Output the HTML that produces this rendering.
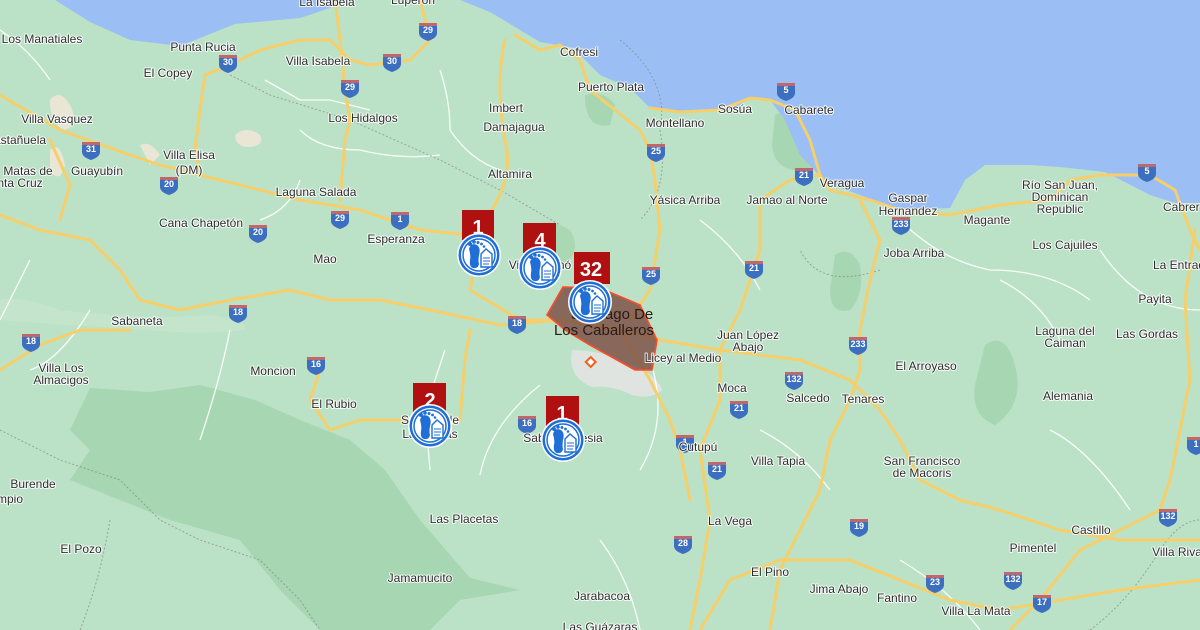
<!DOCTYPE html>
<html><head><meta charset="utf-8"><style>
html,body{margin:0;padding:0;width:1200px;height:630px;overflow:hidden;background:#bbe2c6}
svg{display:block}
text{font-family:"Liberation Sans",sans-serif;font-size:12px;fill:#2e2e2e;stroke:#fff;stroke-width:2px;stroke-opacity:.85;paint-order:stroke;stroke-linejoin:round}
.sh text{font-size:9px;fill:#fff;stroke:none;font-weight:bold}
.num{fill:#fff;stroke:none;font-size:20px;font-weight:bold}
</style></head><body>
<svg width="1200" height="630" viewBox="0 0 1200 630" xmlns="http://www.w3.org/2000/svg">
<defs>
<g id="sh"><path d="M-9,-7 h18 v9 q0,5 -9,8 q-9,-3 -9,-8z" fill="#3d6fc0"/><rect x="-9" y="-8" width="18" height="3" fill="#c0676c"/></g>
<g id="mk">
<circle r="22" fill="#fff"/><circle r="20.5" fill="#1f6fd6"/><circle r="18" fill="#fff"/><circle r="16" fill="#fff" stroke="#1f6fd6" stroke-width="1.5"/>
<path d="M-10,-6 q2,-7 8,-4 q4,3 2,10 q-1,6 0,9 q-1,5 -6,4 q-4,-1 -3,-8 q1,-4 -1,-11z" fill="#1f6fd6"/>
<circle cx="-9" cy="-11" r="2" fill="#1f6fd6"/><circle cx="-5" cy="-13" r="1.8" fill="#1f6fd6"/><circle cx="-1" cy="-12.5" r="1.5" fill="#1f6fd6"/><circle cx="2.5" cy="-11" r="1.4" fill="#1f6fd6"/><circle cx="5" cy="-8.5" r="1.3" fill="#1f6fd6"/>
<path d="M2,-1 l5,-5 l6,5 v13 h-11z" fill="#fff" stroke="#1f6fd6" stroke-width="1.4"/>
<path d="M4,3 h7 M4,6 h7 M4,9 h6" stroke="#1f6fd6" stroke-width="1"/>
</g>
</defs>
<rect width="1200" height="630" fill="#bbe2c6"/>
<path d="M90,388 L70,430 L90,450 L70,480 L170,520 L240,540 L280,590 L320,630 L430,630 L460,600 L520,590 L470,578 L420,520 L385,470 L350,440 L300,420 L255,400 L200,385 L150,392Z" fill="#a7d6b2"/>
<path d="M835,255 q15,-10 25,10 q5,30 -10,45 q-20,5 -20,-20z" fill="#a7d6b2"/>
<path d="M985,345 q20,-15 30,20 q10,40 -20,60 q-25,-10 -20,-40z" fill="#a7d6b2"/>
<path d="M775,115 q30,-15 50,5 q10,40 -15,50 q-35,5 -38,-25z" fill="#a7d6b2"/>
<path d="M585,95 q20,-5 30,10 l-5,20 q-25,5 -25,-30z" fill="#a7d6b2"/>
<path d="M525,230 q20,-15 45,0 q15,25 -15,40 q-30,0 -30,-40z" fill="#a9d8b3"/>
<path d="M235,135 q12,-10 25,0 q5,10 -10,12 q-15,0 -15,-12z" fill="#eae6d6"/>
<path d="M50,100 q10,-12 20,5 q10,20 -5,25 q-15,-5 -15,-30z" fill="#eae6d6"/>
<path d="M50,150 q10,-10 15,15 q-5,20 -15,5z" fill="#eae6d6"/>
<path d="M140,145 q10,-5 20,10 l-10,10z" fill="#eae6d6"/>
<path d="M0,300 q20,-5 60,10 q80,10 150,5 q40,5 35,15 q-40,5 -100,0 q-80,-5 -145,-10z" fill="#c9e6cf" opacity=".6"/>
<path d="M572,350 q30,0 60,15 q25,10 30,25 q-10,10 -30,5 q-20,-10 -40,-8 q-25,-10 -20,-37z" fill="#dfe4e1"/>
<path d="M55,0 L340,0 L330,8 L300,18 L235,24 L180,46 L130,40 L90,22Z" fill="#9bbff4"/>
<path d="M460,0 L1200,0 L1200,203 L1175,203 L1150,195 L1105,172 L1060,167 L1030,165 L985,165 L965,180 L950,208 L900,210 L860,195 L827,183 L800,155 L785,120 L770,100 L750,98 L735,108 L720,110 L680,112 L650,108 L630,88 L600,75 L585,60 L575,48 L540,42 L520,30 L490,12Z" fill="#9bbff4"/>
<g fill="none" stroke="#fff" stroke-width="1.3" opacity=".9">
<path d="M265,80 L300,100 L330,100 L370,110"/><path d="M300,130 q20,20 60,20 q40,10 80,5"/>
<path d="M440,70 q10,30 10,60 q20,30 50,40"/><path d="M300,180 q-10,30 -40,40"/>
<path d="M700,220 q40,30 60,70"/><path d="M900,220 q40,40 90,50 q60,0 100,30"/>
<path d="M1000,280 q40,20 60,60"/><path d="M1100,250 q40,60 100,60"/>
<path d="M0,30 q30,20 50,50"/><path d="M30,260 q-20,40 -30,60"/>
<path d="M430,470 l-5,-60 l20,-60"/><path d="M480,475 q10,-50 60,-90"/>
<path d="M650,360 q20,60 -10,110"/><path d="M760,430 q40,20 70,60"/>
<path d="M1050,430 q40,20 80,80"/><path d="M30,370 q30,-10 60,-60"/>
<path d="M200,440 q20,-60 30,-110"/><path d="M600,540 q30,40 40,90"/>
<path d="M900,560 q50,30 80,70"/>
</g>
<g fill="none" stroke="#888" stroke-width="1" stroke-dasharray="2,2" opacity=".7">
<path d="M230,75 L270,95 L350,120 L440,160 L470,175 L500,190 L560,225"/>
<path d="M0,430 L60,460 L120,480 L160,520 L200,540 L260,560 L300,600 L320,630"/>
<path d="M110,520 q-10,60 -30,110"/><path d="M880,270 q-60,20 -80,-20"/>
<path d="M1090,630 q40,-30 70,-80 q20,-30 40,-30"/>
<path d="M620,40 q50,40 40,90 q10,60 -20,90"/>
</g>
<g fill="none" stroke="#f6cf6a" stroke-width="3" stroke-linecap="round" stroke-linejoin="round">
<path d="M0,95 L60,130 L130,155 L160,165 L200,175 L300,200 L360,210 L420,230 L470,235"/>
<path d="M230,65 L205,75 L200,110 L195,150 L200,170"/>
<path d="M230,65 L260,50 L300,40 L330,40 L350,60 L370,65 L410,60 L430,40 L420,0"/>
<path d="M335,0 L340,40 L345,90 L350,120 L345,140 L340,200"/>
<path d="M515,35 L540,50 L560,45 L580,60 L590,90 L615,110 L640,130 L650,150 L655,180 L660,230 L650,290 L630,320"/>
<path d="M505,40 q-10,40 0,100 q10,40 -20,80 L480,240 L470,290 L520,320 L560,320"/>
<path d="M650,108 L680,112 L720,110 L750,98 L770,100 L795,110 L810,140 L820,175 L830,190 L870,200 L900,210 L950,215 L1000,205 L1050,200 L1070,180 L1100,175 L1150,175 L1175,190 L1190,230 L1200,250"/>
<path d="M1195,230 L1185,300 L1190,380 L1180,430 L1170,480 L1160,510 L1120,530 L1080,550 L1040,600 L1010,630"/>
<path d="M820,175 L790,180 L760,200 L760,250 L740,310 L720,350 L720,400 L700,450 L710,520 L700,580 L690,630"/>
<path d="M560,320 L620,330 L660,340 L720,350 L800,360 L850,380 L880,410 L900,440 L920,480 L960,500 L1000,510 L1060,530 L1120,540 L1200,540"/>
<path d="M860,200 L880,240 L870,280 L860,330 L860,370 L850,400 L830,440 L820,490 L800,530 L780,570 L770,630"/>
<path d="M620,330 L650,380 L670,420 L680,450 L690,500"/>
<path d="M0,215 L40,230 L90,240 L120,270 L140,300 L180,310 L230,300 L290,290 L330,300 L380,300 L430,310 L500,325 L560,320"/>
<path d="M0,370 L40,345 L80,330 L130,330"/>
<path d="M320,370 L310,400 L330,430 L360,420 L410,420 L440,430 L460,420 L465,360 L470,330"/>
<path d="M50,140 L70,185 L60,220"/>
<path d="M700,630 L730,580 L780,560 L850,560 L900,580 L950,600 L1000,610 L1060,600 L1120,590 L1200,580"/>
</g>
<path d="M563,287 L600,288 L640,305 L657,340 L652,370 L635,370 L590,345 L565,330 L547,315Z" fill="#7a4a40" fill-opacity=".8" stroke="#ff4a2a" stroke-width="1.6"/>
<rect x="587" y="358" width="7" height="7" fill="#fff" stroke="#f06020" stroke-width="2" transform="rotate(45 590 362)"/>
<g class="sh">
<g transform="translate(228,63)"><use href="#sh"/><text x="0" y="2" text-anchor="middle">30</text></g>
<g transform="translate(428,31)"><use href="#sh"/><text x="0" y="2" text-anchor="middle">29</text></g>
<g transform="translate(392,62)"><use href="#sh"/><text x="0" y="2" text-anchor="middle">30</text></g>
<g transform="translate(350,88)"><use href="#sh"/><text x="0" y="2" text-anchor="middle">29</text></g>
<g transform="translate(91,150)"><use href="#sh"/><text x="0" y="2" text-anchor="middle">31</text></g>
<g transform="translate(169,185)"><use href="#sh"/><text x="0" y="2" text-anchor="middle">20</text></g>
<g transform="translate(340,219)"><use href="#sh"/><text x="0" y="2" text-anchor="middle">29</text></g>
<g transform="translate(400,220)"><use href="#sh"/><text x="0" y="2" text-anchor="middle">1</text></g>
<g transform="translate(258,233)"><use href="#sh"/><text x="0" y="2" text-anchor="middle">20</text></g>
<g transform="translate(238,313)"><use href="#sh"/><text x="0" y="2" text-anchor="middle">18</text></g>
<g transform="translate(31,342)"><use href="#sh"/><text x="0" y="2" text-anchor="middle">18</text></g>
<g transform="translate(316,365)"><use href="#sh"/><text x="0" y="2" text-anchor="middle">16</text></g>
<g transform="translate(517,324)"><use href="#sh"/><text x="0" y="2" text-anchor="middle">18</text></g>
<g transform="translate(651,275)"><use href="#sh"/><text x="0" y="2" text-anchor="middle">25</text></g>
<g transform="translate(656,152)"><use href="#sh"/><text x="0" y="2" text-anchor="middle">25</text></g>
<g transform="translate(786,91)"><use href="#sh"/><text x="0" y="2" text-anchor="middle">5</text></g>
<g transform="translate(804,176)"><use href="#sh"/><text x="0" y="2" text-anchor="middle">21</text></g>
<g transform="translate(754,269)"><use href="#sh"/><text x="0" y="2" text-anchor="middle">21</text></g>
<g transform="translate(901,225)"><use href="#sh"/><text x="0" y="2" text-anchor="middle">233</text></g>
<g transform="translate(1147,172)"><use href="#sh"/><text x="0" y="2" text-anchor="middle">5</text></g>
<g transform="translate(858,345)"><use href="#sh"/><text x="0" y="2" text-anchor="middle">233</text></g>
<g transform="translate(794,380)"><use href="#sh"/><text x="0" y="2" text-anchor="middle">132</text></g>
<g transform="translate(739,409)"><use href="#sh"/><text x="0" y="2" text-anchor="middle">21</text></g>
<g transform="translate(685,443)"><use href="#sh"/><text x="0" y="2" text-anchor="middle">1</text></g>
<g transform="translate(717,470)"><use href="#sh"/><text x="0" y="2" text-anchor="middle">21</text></g>
<g transform="translate(527,424)"><use href="#sh"/><text x="0" y="2" text-anchor="middle">16</text></g>
<g transform="translate(859,527)"><use href="#sh"/><text x="0" y="2" text-anchor="middle">19</text></g>
<g transform="translate(683,544)"><use href="#sh"/><text x="0" y="2" text-anchor="middle">28</text></g>
<g transform="translate(1013,580)"><use href="#sh"/><text x="0" y="2" text-anchor="middle">132</text></g>
<g transform="translate(935,583)"><use href="#sh"/><text x="0" y="2" text-anchor="middle">23</text></g>
<g transform="translate(1042,603)"><use href="#sh"/><text x="0" y="2" text-anchor="middle">17</text></g>
<g transform="translate(1168,517)"><use href="#sh"/><text x="0" y="2" text-anchor="middle">132</text></g>
<g transform="translate(1196,445)"><use href="#sh"/><text x="0" y="2" text-anchor="middle">1</text></g>
</g>
<text x="327" y="6" text-anchor="middle">La Isabela</text>
<text x="413" y="4" text-anchor="middle">Luperón</text>
<text x="42" y="43" text-anchor="middle">Los Manatiales</text>
<text x="203" y="51" text-anchor="middle">Punta Rucia</text>
<text x="168" y="77" text-anchor="middle">El Copey</text>
<text x="318" y="65" text-anchor="middle">Villa Isabela</text>
<text x="579" y="56" text-anchor="middle">Cofresi</text>
<text x="611" y="91" text-anchor="middle">Puerto Plata</text>
<text x="735" y="113" text-anchor="middle">Sosúa</text>
<text x="809" y="114" text-anchor="middle">Cabarete</text>
<text x="675" y="127" text-anchor="middle">Montellano</text>
<text x="506" y="112" text-anchor="middle">Imbert</text>
<text x="514" y="131" text-anchor="middle">Damajagua</text>
<text x="363" y="122" text-anchor="middle">Los Hidalgos</text>
<text x="57" y="123" text-anchor="middle">Villa Vasquez</text>
<text x="20" y="144" text-anchor="middle">astañuela</text>
<text x="189" y="159" text-anchor="middle">Villa Elisa</text>
<text x="189" y="174" text-anchor="middle">(DM)</text>
<text x="28" y="175" text-anchor="middle">Matas de</text>
<text x="20" y="187" text-anchor="middle">nta Cruz</text>
<text x="97" y="175" text-anchor="middle">Guayubín</text>
<text x="510" y="178" text-anchor="middle">Altamira</text>
<text x="316" y="196" text-anchor="middle">Laguna Salada</text>
<text x="685" y="204" text-anchor="middle">Yásica Arriba</text>
<text x="787" y="204" text-anchor="middle">Jamao al Norte</text>
<text x="842" y="187" text-anchor="middle">Veragua</text>
<text x="908" y="202" text-anchor="middle">Gaspar</text>
<text x="908" y="215" text-anchor="middle">Hernandez</text>
<text x="987" y="224" text-anchor="middle">Magante</text>
<text x="1060" y="189" text-anchor="middle">Río San Juan,</text>
<text x="1060" y="201" text-anchor="middle">Dominican</text>
<text x="1060" y="213" text-anchor="middle">Republic</text>
<text x="1163" y="211">Cabrer</text>
<text x="201" y="227" text-anchor="middle">Cana Chapetón</text>
<text x="396" y="243" text-anchor="middle">Esperanza</text>
<text x="1065" y="249" text-anchor="middle">Los Cajuiles</text>
<text x="914" y="257" text-anchor="middle">Joba Arriba</text>
<text x="325" y="263" text-anchor="middle">Mao</text>
<text x="1153" y="269">La Entrad</text>
<text x="1155" y="303" text-anchor="middle">Payita</text>
<text x="137" y="325" text-anchor="middle">Sabaneta</text>
<text x="1065" y="335" text-anchor="middle">Laguna del</text>
<text x="1065" y="347" text-anchor="middle">Caiman</text>
<text x="1147" y="338" text-anchor="middle">Las Gordas</text>
<text x="748" y="339" text-anchor="middle">Juan López</text>
<text x="748" y="351" text-anchor="middle">Abajo</text>
<text x="61" y="372" text-anchor="middle">Villa Los</text>
<text x="61" y="384" text-anchor="middle">Almacigos</text>
<text x="926" y="370" text-anchor="middle">El Arroyaso</text>
<text x="273" y="375" text-anchor="middle">Moncion</text>
<text x="683" y="362" text-anchor="middle">Licey al Medio</text>
<text x="1068" y="400" text-anchor="middle">Alemania</text>
<text x="732" y="392" text-anchor="middle">Moca</text>
<text x="808" y="402" text-anchor="middle">Salcedo</text>
<text x="863" y="403" text-anchor="middle">Tenares</text>
<text x="334" y="408" text-anchor="middle">El Rubio</text>
<text x="698" y="451" text-anchor="middle">Cutupú</text>
<text x="922" y="465" text-anchor="middle">San Francisco</text>
<text x="922" y="477" text-anchor="middle">de Macoris</text>
<text x="778" y="465" text-anchor="middle">Villa Tapia</text>
<text x="33" y="488" text-anchor="middle">Burende</text>
<text x="10" y="503" text-anchor="middle">mpio</text>
<text x="464" y="523" text-anchor="middle">Las Placetas</text>
<text x="1091" y="534" text-anchor="middle">Castillo</text>
<text x="730" y="525" text-anchor="middle">La Vega</text>
<text x="1033" y="552" text-anchor="middle">Pimentel</text>
<text x="1177" y="556" text-anchor="middle">Villa Riva</text>
<text x="81" y="553" text-anchor="middle">El Pozo</text>
<text x="770" y="576" text-anchor="middle">El Pino</text>
<text x="839" y="593" text-anchor="middle">Jima Abajo</text>
<text x="420" y="582" text-anchor="middle">Jamamucito</text>
<text x="602" y="600" text-anchor="middle">Jarabacoa</text>
<text x="897" y="602" text-anchor="middle">Fantino</text>
<text x="976" y="615" text-anchor="middle">Villa La Mata</text>
<text x="600" y="631" text-anchor="middle">Las Guázaras</text>
<text x="430" y="424" text-anchor="middle">Sabana de</text>
<text x="430" y="438" text-anchor="middle">Las Matas</text>
<text x="563" y="442" text-anchor="middle">Sabana Iglesia</text>
<text x="540" y="269" text-anchor="middle">Villa Bisonó</text>
<text x="612" y="319" text-anchor="middle" style="font-size:15px;stroke:none;fill:#2a1a16">Santiago De</text>
<text x="604" y="335" text-anchor="middle" style="font-size:15px;stroke:none;fill:#2a1a16">Los Caballeros</text>
<rect x="462" y="210" width="32" height="30" fill="#b01010"/><text class="num" x="478" y="234" text-anchor="middle">1</text>
<g transform="translate(479,255)"><use href="#mk"/></g>
<rect x="523" y="223" width="33" height="30" fill="#b01010"/><text class="num" x="540" y="247" text-anchor="middle">4</text>
<g transform="translate(540,268)"><use href="#mk"/></g>
<rect x="574" y="252" width="36" height="32" fill="#b01010"/><text class="num" x="591" y="276" text-anchor="middle">32</text>
<g transform="translate(590,302)"><use href="#mk"/></g>
<rect x="413" y="383" width="33" height="30" fill="#b01010"/><text class="num" x="430" y="407" text-anchor="middle">2</text>
<g transform="translate(430,426)"><use href="#mk"/></g>
<rect x="546" y="396" width="33" height="30" fill="#b01010"/><text class="num" x="562" y="420" text-anchor="middle">1</text>
<g transform="translate(563,440)"><use href="#mk"/></g>
</svg>
</body></html>
